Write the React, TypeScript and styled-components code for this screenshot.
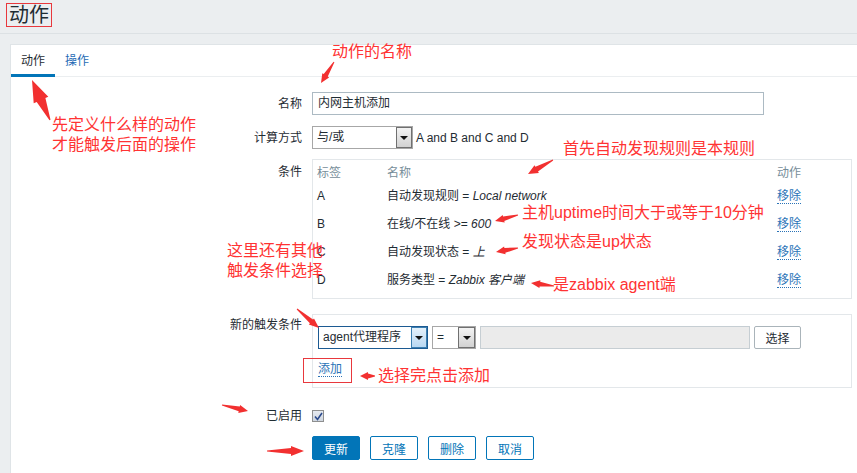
import React from 'react';
import styled, { createGlobalStyle } from 'styled-components';

const GlobalStyle = createGlobalStyle`
  html, body {
    margin: 0;
    padding: 0;
  }
  body {
    background: #ebeef0;
    font-family: "Liberation Sans", "Noto Sans CJK SC", sans-serif;
    font-size: 12px;
    color: #1f2c33;
    overflow: hidden;
  }
`;

const Page = styled.div`
  position: relative;
  height: 473px;
  overflow: hidden;
`;

const Header = styled.header`
  height: 34px;
  box-sizing: border-box;
  border-bottom: 1px solid #dce1e4;
  padding: 3px 0 0 6px;
`;

const Title = styled.h1`
  display: inline-block;
  margin: 0;
  padding: 0 2px;
  border: 1px solid #e8383d;
  font-size: 20px;
  line-height: 22px;
  font-weight: normal;
  color: #1f2c33;
`;

const Panel = styled.section`
  margin: 10px 0 0 10px;
  height: 440px;
  background: #fff;
  border: 1px solid #dfe4e7;
  border-right: none;
`;

const TabBar = styled.nav`
  display: flex;
  height: 32px;
  box-sizing: border-box;
  border-bottom: 1px solid #ebeef0;
`;

const Tab = styled.a<{ $active?: boolean }>`
  height: 32px;
  box-sizing: border-box;
  padding: 8px 10px 0;
  line-height: 16px;
  border-bottom: 3px solid ${(p) => (p.$active ? '#0275b8' : 'transparent')};
  color: ${(p) => (p.$active ? '#1f2c33' : '#1f6bb5')};
  margin-bottom: -1px;
`;

const Form = styled.div`
  display: flex;
  flex-direction: column;
  padding-top: 15px;
`;

const Row = styled.div<{ $mt?: number }>`
  display: flex;
  align-items: flex-start;
  margin-top: ${(p) => p.$mt ?? 0}px;
`;

const Label = styled.label<{ $pt?: number }>`
  flex: 0 0 291px;
  margin-right: 10px;
  text-align: right;
  line-height: 16px;
  padding-top: ${(p) => p.$pt ?? 4}px;
`;

const Field = styled.div`
  display: flex;
  align-items: center;
  gap: 3px;
`;

const TextInput = styled.div<{ $width: number; $disabled?: boolean }>`
  width: ${(p) => p.$width}px;
  height: 23px;
  box-sizing: border-box;
  border: 1px solid ${(p) => (p.$disabled ? '#c6ced3' : '#acbac3')};
  background: ${(p) => (p.$disabled ? '#ebebeb' : '#fff')};
  padding: 0 5px;
  line-height: 21px;
`;

const SelectBox = styled.div<{ $width: number; $focused?: boolean }>`
  display: flex;
  width: ${(p) => p.$width}px;
  height: 23px;
  box-sizing: border-box;
  border: 1px solid ${(p) => (p.$focused ? '#1c5a92' : '#a7a7a7')};
  background: #fff;
`;

const SelectValue = styled.span`
  flex: 1;
  padding-left: 4px;
  line-height: 21px;
  white-space: nowrap;
  overflow: hidden;
`;

const DropButton = styled.span<{ $focused?: boolean; $w?: number }>`
  display: flex;
  align-items: center;
  justify-content: center;
  width: ${(p) => p.$w ?? 16}px;
  box-sizing: border-box;
  border: 1px solid ${(p) => (p.$focused ? '#3c7fb1' : '#707070')};
  background: ${(p) =>
    p.$focused
      ? 'linear-gradient(#e5f1fb, #b9d8f2)'
      : 'linear-gradient(#f3f3f3, #d2d2d2)'};
  &::after {
    content: '';
    border-left: 4px solid transparent;
    border-right: 4px solid transparent;
    border-top: 4px solid #111;
  }
`;

const Plain = styled.span`
  line-height: 16px;
`;

const Box = styled.div<{ $pad: string }>`
  width: 540px;
  box-sizing: border-box;
  border: 1px solid #e3e7ea;
  padding: ${(p) => p.$pad};
`;

const CondGrid = styled.div`
  display: grid;
  grid-template-columns: 70px 390px auto;
  grid-template-rows: 18px repeat(4, 28px);
  align-items: center;
`;

const HeadCell = styled.div`
  color: #768d99;
  line-height: 18px;
`;

const Cell = styled.div`
  line-height: 16px;
  white-space: nowrap;
`;

const LinkText = styled.a`
  display: inline-block;
  color: #2a73b7;
  line-height: 14px;
  border-bottom: 1px dotted #2a73b7;
`;

const NewRow = styled.div`
  display: flex;
  gap: 4px;
`;

const SmallButton = styled.button`
  width: 47px;
  height: 23px;
  padding: 0;
  border: 1px solid #aab4ba;
  border-radius: 2px;
  background: #fff;
  font: inherit;
  color: #1f2c33;
`;

const AddRow = styled.div`
  position: relative;
  height: 25px;
  margin-top: 9px;
  padding-top: 4px;
  box-sizing: border-box;
  &::before {
    content: '';
    position: absolute;
    left: -15px;
    top: 0;
    width: 47px;
    height: 23px;
    border: 1px solid #e8383d;
  }
`;

const Check = styled.span`
  display: flex;
  align-items: center;
  justify-content: center;
  width: 12px;
  height: 12px;
  margin-top: 6px;
  box-sizing: border-box;
  border: 1px solid #8e8f8f;
  background: linear-gradient(#e6eaf0, #cfd6df);
`;

const Buttons = styled.div`
  display: flex;
  gap: 10px;
`;

const Btn = styled.button<{ $primary?: boolean }>`
  width: 48px;
  height: 24px;
  padding: 0;
  border: 1px solid #0275b8;
  border-radius: 2px;
  background: ${(p) => (p.$primary ? '#0275b8' : '#fff')};
  color: ${(p) => (p.$primary ? '#fff' : '#0275b8')};
  font: inherit;
`;

const Note = styled.div<{ $x: number; $y: number }>`
  position: absolute;
  left: ${(p) => p.$x}px;
  top: ${(p) => p.$y}px;
  color: #ff3333;
  font-size: 16px;
  line-height: 20px;
  white-space: pre;
  pointer-events: none;
`;

const Overlay = styled.svg`
  position: absolute;
  left: 0;
  top: 0;
  pointer-events: none;
`;

type ArrowDef = [number, number, number, number, number, number];

// tail x, tail y, tip x, tip y, head length, head width
const arrows: ArrowDef[] = [
  [334, 62, 321, 83, 9, 8],
  [50, 120, 32, 80, 22, 16],
  [553, 160, 528, 174, 10, 9],
  [518, 215, 495, 221, 9, 8],
  [518, 248, 496, 252, 9, 8],
  [554, 286, 531, 283, 9, 8],
  [297, 309, 319, 328, 10, 8],
  [222, 405, 248, 411, 9, 8],
  [267, 451, 304, 451, 13, 10],
  [375, 376, 360, 376, 8, 8],
];

function arrowPoints([x1, y1, x2, y2, hl, hw]: ArrowDef): string {
  const len = Math.hypot(x2 - x1, y2 - y1);
  const dx = (x2 - x1) / len;
  const dy = (y2 - y1) / len;
  const nx = -dy;
  const ny = dx;
  const bx = x2 - dx * hl;
  const by = y2 - dy * hl;
  const sw = hw * 0.3;
  const pts = [
    [x1 + nx * 0.5, y1 + ny * 0.5],
    [bx + nx * sw, by + ny * sw],
    [bx + nx * hw * 0.5, by + ny * hw * 0.5],
    [x2, y2],
    [bx - nx * hw * 0.5, by - ny * hw * 0.5],
    [bx - nx * sw, by - ny * sw],
    [x1 - nx * 0.5, y1 - ny * 0.5],
  ];
  return pts.map(([a, b]) => `${a.toFixed(1)},${b.toFixed(1)}`).join(' ');
}

const conditions = [
  { tag: 'A', name: '自动发现规则 = ', value: 'Local network' },
  { tag: 'B', name: '在线/不在线 >= ', value: '600' },
  { tag: 'C', name: '自动发现状态 = ', value: '上' },
  { tag: 'D', name: '服务类型 = ', value: 'Zabbix 客户端' },
];

function Select({ value, width, focused, btn }: { value: string; width: number; focused?: boolean; btn?: number }) {
  return (
    <SelectBox $width={width} $focused={focused}>
      <SelectValue>{value}</SelectValue>
      <DropButton $focused={focused} $w={btn} />
    </SelectBox>
  );
}

export default function App() {
  return (
    <Page>
      <GlobalStyle />
      <Header>
        <Title>动作</Title>
      </Header>
      <Panel>
        <TabBar>
          <Tab $active>动作</Tab>
          <Tab>操作</Tab>
        </TabBar>
        <Form>
          <Row>
            <Label>名称</Label>
            <TextInput $width={452}>内网主机添加</TextInput>
          </Row>
          <Row $mt={11}>
            <Label>计算方式</Label>
            <Field>
              <Select value="与/或" width={101} />
              <Plain>A and B and C and D</Plain>
            </Field>
          </Row>
          <Row $mt={10}>
            <Label $pt={5}>条件</Label>
            <Box $pad="4px 4px 4px 4px">
              <CondGrid>
                <HeadCell>标签</HeadCell>
                <HeadCell>名称</HeadCell>
                <HeadCell>动作</HeadCell>
                {conditions.map((c) => (
                  <React.Fragment key={c.tag}>
                    <Cell>{c.tag}</Cell>
                    <Cell>
                      {c.name}
                      <i>{c.value}</i>
                    </Cell>
                    <Cell>
                      <LinkText>移除</LinkText>
                    </Cell>
                  </React.Fragment>
                ))}
              </CondGrid>
            </Box>
          </Row>
          <Row $mt={15}>
            <Label $pt={3}>新的触发条件</Label>
            <Box $pad="11px 5px 4px 5px">
              <NewRow>
                <Select value="agent代理程序" width={110} focused />
                <Select value="=" width={44} btn={17} />
                <TextInput $width={270} $disabled />
                <SmallButton>选择</SmallButton>
              </NewRow>
              <AddRow>
                <LinkText>添加</LinkText>
              </AddRow>
            </Box>
          </Row>
          <Row $mt={16}>
            <Label>已启用</Label>
            <Check>
              <svg width="9" height="9" viewBox="0 0 9 9">
                <path d="M1 4.5 L3.5 7.5 L8 1" fill="none" stroke="#2b4a8c" strokeWidth="1.6" />
              </svg>
            </Check>
          </Row>
          <Row $mt={12}>
            <Label />
            <Buttons>
              <Btn $primary>更新</Btn>
              <Btn>克隆</Btn>
              <Btn>删除</Btn>
              <Btn>取消</Btn>
            </Buttons>
          </Row>
        </Form>
      </Panel>

      <Note $x={332} $y={42}>动作的名称</Note>
      <Note $x={52} $y={115}>{'先定义什么样的动作\n才能触发后面的操作'}</Note>
      <Note $x={563} $y={139}>首先自动发现规则是本规则</Note>
      <Note $x={522} $y={203}>主机uptime时间大于或等于10分钟</Note>
      <Note $x={522} $y={232}>发现状态是up状态</Note>
      <Note $x={553} $y={275}>是zabbix agent端</Note>
      <Note $x={227} $y={241}>{'这里还有其他\n触发条件选择'}</Note>
      <Note $x={378} $y={366}>选择完点击添加</Note>

      <Overlay width="857" height="473" viewBox="0 0 857 473">
        {arrows.map((a, i) => (
          <polygon key={i} points={arrowPoints(a)} fill="#f23030" />
        ))}
      </Overlay>
    </Page>
  );
}
